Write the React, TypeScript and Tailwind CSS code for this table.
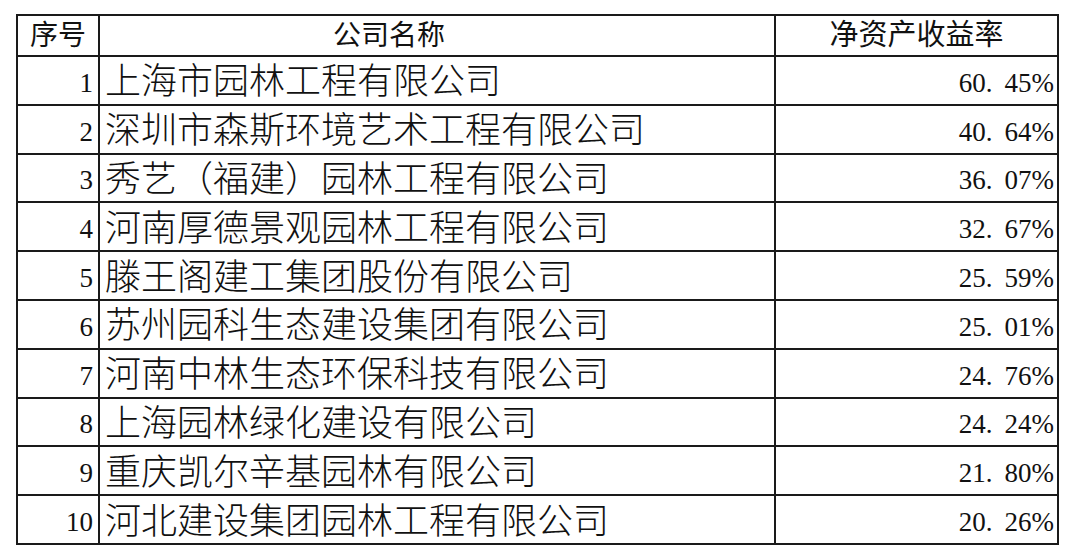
import React from "react";

const rows: [string, string, string][] = [
  ["1", "上海市园林工程有限公司", "60.45%"],
  ["2", "深圳市森斯环境艺术工程有限公司", "40.64%"],
  ["3", "秀艺（福建）园林工程有限公司", "36.07%"],
  ["4", "河南厚德景观园林工程有限公司", "32.67%"],
  ["5", "滕王阁建工集团股份有限公司", "25.59%"],
  ["6", "苏州园科生态建设集团有限公司", "25.01%"],
  ["7", "河南中林生态环保科技有限公司", "24.76%"],
  ["8", "上海园林绿化建设有限公司", "24.24%"],
  ["9", "重庆凯尔辛基园林有限公司", "21.80%"],
  ["10", "河北建设集团园林工程有限公司", "20.26%"],
];

function Pct({ v }: { v: string }) {
  const [a, b] = v.split(".");
  return (
    <span>
      {a}.<span className="inline-block w-[12px]" />
      {b}
    </span>
  );
}

export default function App() {
  return (
    <div
      className="w-[1080px] h-[555px] bg-white pl-[16px] pt-[14px] text-[#111]"
      style={{ fontFamily: '"Liberation Serif", "Noto Sans CJK SC", serif' }}
    >
      <table className="border-collapse border-2 border-[#1a1a1a] table-fixed w-[1041px]">
        <colgroup>
          <col className="w-[82px]" />
          <col className="w-[676px]" />
          <col className="w-[283px]" />
        </colgroup>
        <thead>
          <tr className="h-[41px]">
            <th className="border-2 border-[#1a1a1a] p-0 font-normal text-[28px] leading-none text-center">
              序号
            </th>
            <th className="border-2 border-[#1a1a1a] p-0 pl-[233px] font-normal text-[28px] leading-none text-left">
              公司名称
            </th>
            <th className="border-2 border-[#1a1a1a] p-0 font-normal text-[29px] leading-none text-center">
              净资产收益率
            </th>
          </tr>
        </thead>
        <tbody>
          {rows.map(([n, name, pct]) => (
            <tr key={n} className="h-[48.8px]">
              <td className="border-2 border-[#1a1a1a] p-0 pr-[5px] text-right text-[27px] leading-none align-middle pt-[6px]">
                {n}
              </td>
              <td className="border-2 border-[#1a1a1a] p-0 pl-[5px] pt-[4px] text-left text-[36px] leading-none align-middle whitespace-nowrap font-light">
                {name}
              </td>
              <td className="border-2 border-[#1a1a1a] p-0 pr-[3px] text-right text-[27px] leading-none align-middle pt-[6px]">
                <Pct v={pct} />
              </td>
            </tr>
          ))}
        </tbody>
      </table>
    </div>
  );
}
